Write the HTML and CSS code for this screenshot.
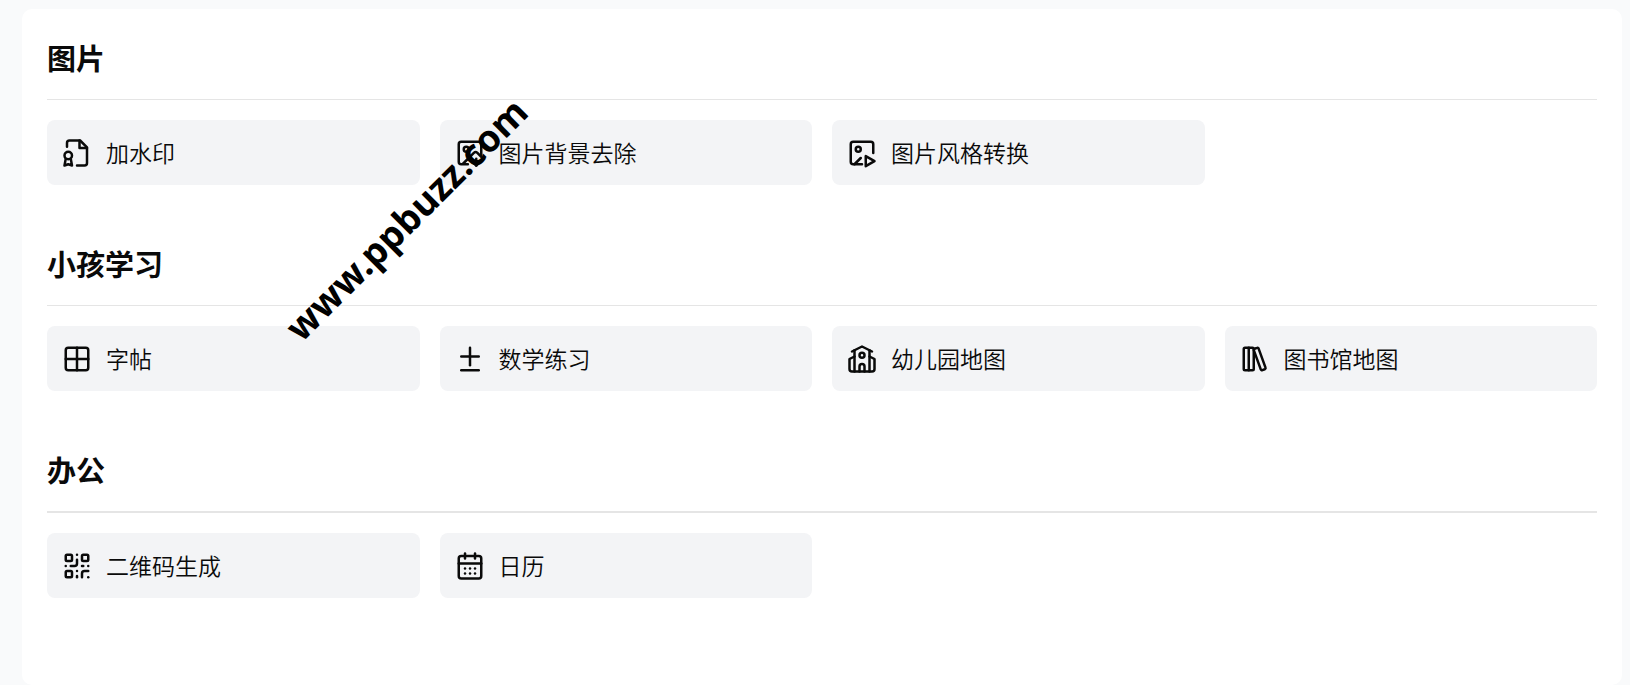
FILE: index.html
```html
<!DOCTYPE html>
<html lang="zh-CN">

<head>

    <meta charset="utf-8">
    <meta name="viewport" content="width=device-width, initial-scale=1">
    <title>工具</title>

    <link rel="stylesheet" href="styles.css">

</head>

<body>

    <main class="panel">

        <section class="group">
            <h2>图片</h2>
            <div class="cards">
                <a class="card" href="#">
                    <svg class="icon" viewBox="0 0 24 24">
                        <path d="M4 7V4a2 2 0 0 1 2-2h8.5L20 7.5V20a2 2 0 0 1-2 2h-6" />
                        <path d="M14 2v6h6" />
                        <path d="M5 17a3 3 0 1 0 0-6 3 3 0 0 0 0 6Z" />
                        <path d="M7 16.5 8 22l-3-1-3 1 1-5.5" />
                    </svg>
                    <span>加水印</span>
                </a>
                <a class="card" href="#">
                    <svg class="icon" viewBox="0 0 24 24">
                        <path d="M10.3 21H5a2 2 0 0 1-2-2V5a2 2 0 0 1 2-2h14a2 2 0 0 1 2 2v10l-3.1-3.1a2 2 0 0 0-2.814.014L6 21" />
                        <path d="m14 19 3 3v-5.5" />
                        <path d="m17 22 3-3" />
                        <circle cx="9" cy="9" r="2" />
                    </svg>
                    <span>图片背景去除</span>
                </a>
                <a class="card" href="#">
                    <svg class="icon" viewBox="0 0 24 24">
                        <path d="M21 12V5a2 2 0 0 0-2-2H5a2 2 0 0 0-2 2v14a2 2 0 0 0 2 2h7" />
                        <path d="M15 14.5v8l7-4z" />
                        <path d="m6 21 5-5" />
                        <circle cx="9" cy="9" r="2" />
                    </svg>
                    <span>图片风格转换</span>
                </a>
            </div>
        </section>

        <section class="group">
            <h2>小孩学习</h2>
            <div class="cards">
                <a class="card" href="#">
                    <svg class="icon" viewBox="0 0 24 24">
                        <rect x="3" y="3" width="18" height="18" rx="2" />
                        <path d="M3 12h18" />
                        <path d="M12 3v18" />
                    </svg>
                    <span>字帖</span>
                </a>
                <a class="card" href="#">
                    <svg class="icon" viewBox="0 0 24 24">
                        <path d="M12 3v14" />
                        <path d="M5 10h14" />
                        <path d="M5 21h14" />
                    </svg>
                    <span>数学练习</span>
                </a>
                <a class="card" href="#">
                    <svg class="icon" viewBox="0 0 24 24">
                        <path d="M14 22v-4a2 2 0 1 0-4 0v4" />
                        <path d="m18 10 4 2v8a2 2 0 0 1-2 2H4a2 2 0 0 1-2-2v-8l4-2" />
                        <path d="M18 5v17" />
                        <path d="m4 6 8-4 8 4" />
                        <path d="M6 5v17" />
                        <circle cx="12" cy="9" r="2" />
                    </svg>
                    <span>幼儿园地图</span>
                </a>
                <a class="card" href="#">
                    <svg class="icon" viewBox="0 0 24 24">
                        <rect x="3" y="3" width="8" height="18" rx="1" />
                        <path d="M7 3v18" />
                        <path d="M20.4 18.9c.2.5-.1 1.1-.6 1.3l-1.9.7c-.5.2-1.1-.1-1.3-.6L11.1 5.1c-.2-.5.1-1.1.6-1.3l1.9-.7c.5-.2 1.1.1 1.3.6Z" />
                    </svg>
                    <span>图书馆地图</span>
                </a>
            </div>
        </section>

        <section class="group">
            <h2>办公</h2>
            <div class="cards">
                <a class="card" href="#">
                    <svg class="icon" viewBox="0 0 24 24">
                        <rect x="3" y="3" width="5" height="5" rx="1" />
                        <rect x="16" y="3" width="5" height="5" rx="1" />
                        <rect x="3" y="16" width="5" height="5" rx="1" />
                        <path d="M21 16h-3a2 2 0 0 0-2 2v3" />
                        <path d="M21 21v.01" />
                        <path d="M12 7v3a2 2 0 0 1-2 2H7" />
                        <path d="M3 12h.01" />
                        <path d="M12 3h.01" />
                        <path d="M12 16v.01" />
                        <path d="M16 12h1" />
                        <path d="M21 12v.01" />
                        <path d="M12 21v-1" />
                    </svg>
                    <span>二维码生成</span>
                </a>
                <a class="card" href="#">
                    <svg class="icon" viewBox="0 0 24 24">
                        <path d="M8 2v4" />
                        <path d="M16 2v4" />
                        <rect x="3" y="4" width="18" height="18" rx="2" />
                        <path d="M3 10h18" />
                        <path d="M8 14h.01" />
                        <path d="M12 14h.01" />
                        <path d="M16 14h.01" />
                        <path d="M8 18h.01" />
                        <path d="M12 18h.01" />
                        <path d="M16 18h.01" />
                    </svg>
                    <span>日历</span>
                </a>
            </div>
        </section>

        <div class="watermark">www.ppbuzz.com</div>

    </main>

</body>

</html>
```
FILE: styles.css
```css
* {
    margin: 0;
    padding: 0;
    box-sizing: border-box;
}

body {
    padding: 9px 8px 0 22px;
    background: #f9fafb;
    color: #0a0a0a;
    font-family: "Noto Sans CJK SC", sans-serif;
}

.panel {
    position: relative;
    display: flex;
    flex-direction: column;
    gap: 55px;
    padding: 25px 25px 87px;
    border-radius: 10px;
    background: #fff;
}

.group h2 {
    padding-bottom: 19px;
    margin-bottom: 20px;
    border-bottom: 1px solid #e5e5e5;
    font-size: 29px;
    line-height: 46px;
    font-weight: 700;
}

.group:last-of-type h2 {
    border-bottom-width: 2px;
}

.cards {
    display: grid;
    grid-template-columns: repeat(4, 1fr);
    gap: 20px;
}

.card {
    display: flex;
    align-items: center;
    gap: 14px;
    padding: 15px;
    border-radius: 8px;
    background: #f3f4f6;
    color: inherit;
    font-size: 23px;
    line-height: 35px;
    font-weight: 350;
    text-decoration: none;
}

.icon {
    width: 30px;
    height: 30px;
    fill: none;
    stroke: currentColor;
    stroke-width: 2;
    stroke-linecap: round;
    stroke-linejoin: round;
}

/* 水印盖在卡片上面 */
.watermark {
    position: absolute;
    left: 384px;
    top: 210px;
    transform: translate(-50%, -50%) rotate(-45deg);
    color: #000;
    font-family: "Noto Sans", sans-serif;
    font-size: 37px;
    line-height: 50px;
    font-weight: 700;
    pointer-events: none;
}
```
